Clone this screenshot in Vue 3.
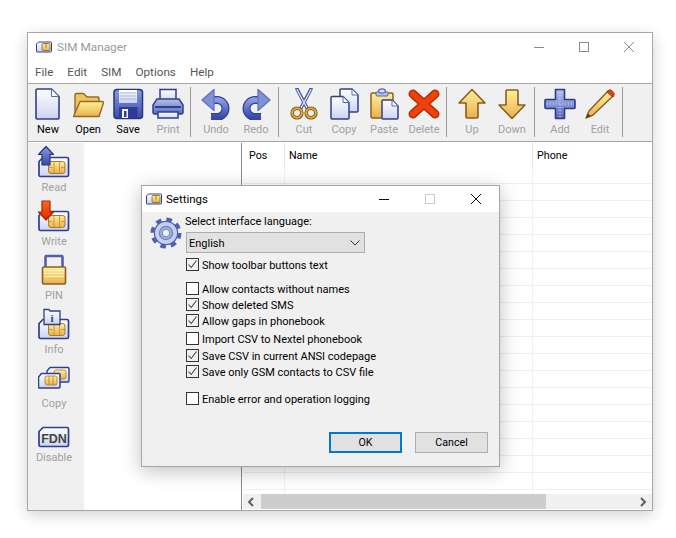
<template>
  <div class="page">
    <!-- shared gradients and icon symbols -->
    <svg class="defs" aria-hidden="true">
      <defs>
        <linearGradient id="paper" x1="0" y1="0" x2="0" y2="1"><stop offset="0" stop-color="#ffffff" /><stop offset="1" stop-color="#ccd3f0" /></linearGradient>
        <linearGradient id="blue" x1="0" y1="0" x2="0" y2="1"><stop offset="0" stop-color="#8a9ae0" /><stop offset="1" stop-color="#3a4aa8" /></linearGradient>
        <linearGradient id="steel" x1="0" y1="0" x2="0" y2="1"><stop offset="0" stop-color="#b4c0ea" /><stop offset="1" stop-color="#5c6cc0" /></linearGradient>
        <linearGradient id="gold" x1="0" y1="0" x2="0" y2="1"><stop offset="0" stop-color="#fff09a" /><stop offset="1" stop-color="#eab04c" /></linearGradient>
        <linearGradient id="red" x1="0" y1="0" x2="0" y2="1"><stop offset="0" stop-color="#ff6a20" /><stop offset="1" stop-color="#e02800" /></linearGradient>

        <symbol id="i-new" viewBox="0 0 32 32">
          <path d="M5.5 1h14L27 8.5V29.5a1.5 1.5 0 0 1-1.5 1.5h-20A1.5 1.5 0 0 1 4 29.5V2.5A1.5 1.5 0 0 1 5.5 1z" fill="url(#paper)" stroke="#2f3f8c" stroke-width="1.6" />
          <path d="M19.5 1v7.5H27z" fill="#fff" stroke="#5a68a8" stroke-width="1" />
        </symbol>

        <symbol id="i-open" viewBox="0 0 32 32">
          <path d="M3 28V7a1.5 1.5 0 0 1 1.5-1.5h7L15 9h11a1 1 0 0 1 1 1v18z" fill="#f2c45c" stroke="#94682a" stroke-width="1.4" />
          <path d="M8 13.5h22.5a1 1 0 0 1 1 1.3L27 28.5H1.5z" fill="url(#gold)" stroke="#94682a" stroke-width="1.4" stroke-linejoin="round" />
        </symbol>

        <symbol id="i-save" viewBox="0 0 32 32">
          <rect x="2" y="1.5" width="28.5" height="29" rx="3" fill="url(#blue)" stroke="#27357f" stroke-width="1.5" />
          <rect x="7" y="2" width="18" height="13" fill="url(#paper)" />
          <path d="M8 5h16M8 8h16M8 11h16" stroke="#aab4dc" stroke-width="1" />
          <rect x="7" y="19" width="18.5" height="11" fill="#2f3d90" />
          <rect x="10" y="21" width="6" height="9" fill="#f4f6ff" />
          <rect x="12" y="23" width="2.5" height="6" fill="#2f3d90" />
        </symbol>

        <symbol id="i-print" viewBox="0 0 32 32">
          <rect x="8" y="1.5" width="16" height="12" fill="url(#paper)" stroke="#2f3f8c" stroke-width="1.5" />
          <path d="M5 11h22l4 6v7.5a1.5 1.5 0 0 1-1.5 1.5h-27A1.5 1.5 0 0 1 1 24.5V17z" fill="url(#steel)" stroke="#2f3f8c" stroke-width="1.5" />
          <path d="M3 19h26" stroke="#2f3f8c" stroke-width="2" />
          <rect x="6" y="24" width="20" height="6" fill="url(#paper)" stroke="#2f3f8c" stroke-width="1.5" />
        </symbol>

        <symbol id="i-undo" viewBox="0 0 32 32">
          <path d="M12 12h5a8.5 8.5 0 0 1 0 17h-6" fill="none" stroke="#2f3f94" stroke-width="8" />
          <path d="M12 12h5a8.5 8.5 0 0 1 0 17h-6" fill="none" stroke="url(#blue)" stroke-width="5.5" />
          <path d="M14 1.5L2 12l12 10.5z" fill="#7e90d8" stroke="#6476c0" stroke-width="1.4" stroke-linejoin="round" />
        </symbol>

        <symbol id="i-redo" viewBox="0 0 32 32">
          <g transform="matrix(-1 0 0 1 32 0)">
            <path d="M12 12h5a8.5 8.5 0 0 1 0 17h-6" fill="none" stroke="#2f3f94" stroke-width="8" />
            <path d="M12 12h5a8.5 8.5 0 0 1 0 17h-6" fill="none" stroke="url(#blue)" stroke-width="5.5" />
            <path d="M14 1.5L2 12l12 10.5z" fill="#7e90d8" stroke="#6476c0" stroke-width="1.4" stroke-linejoin="round" />
          </g>
        </symbol>

        <symbol id="i-cut" viewBox="0 0 32 32">
          <path d="M9 1l10 19M23 1L13 20" stroke="#3c4c98" stroke-width="3.4" stroke-linecap="round" />
          <path d="M9 1.5l10 18.5M23 1.5L13 20" stroke="#dfe4f8" stroke-width="1.4" stroke-linecap="round" />
          <circle cx="9" cy="25" r="4.8" fill="none" stroke="#7a5218" stroke-width="3.6" />
          <circle cx="23" cy="25" r="4.8" fill="none" stroke="#7a5218" stroke-width="3.6" />
          <circle cx="9" cy="25" r="4.8" fill="none" stroke="#e0a840" stroke-width="2" />
          <circle cx="23" cy="25" r="4.8" fill="none" stroke="#e0a840" stroke-width="2" />
        </symbol>

        <symbol id="i-copy" viewBox="0 0 32 32">
          <path d="M13 1h11l6 6v16a1 1 0 0 1-1 1H13a1 1 0 0 1-1-1V2a1 1 0 0 1 1-1z" fill="url(#paper)" stroke="#2f3f8c" stroke-width="1.5" />
          <path d="M24 1v6h6z" fill="#fff" stroke="#5a68a8" stroke-width="1" />
          <path d="M4 8.5h11l6 6V30a1 1 0 0 1-1 1H4a1 1 0 0 1-1-1V9.5a1 1 0 0 1 1-1z" fill="url(#paper)" stroke="#2f3f8c" stroke-width="1.5" />
          <path d="M15 8.5v6h6z" fill="#fff" stroke="#5a68a8" stroke-width="1" />
        </symbol>

        <symbol id="i-paste" viewBox="0 0 32 32">
          <rect x="3" y="5" width="22" height="25" rx="1.5" fill="url(#gold)" stroke="#8a6020" stroke-width="1.5" />
          <rect x="8" y="4" width="12" height="4" rx="1" fill="#b8c2e8" stroke="#5a68a8" stroke-width="1" />
          <ellipse cx="14" cy="3" rx="3.5" ry="2.2" fill="#d8def4" stroke="#5a68a8" stroke-width="1.2" />
          <path d="M15 12h9l6 6v12a1 1 0 0 1-1 1H15a1 1 0 0 1-1-1V13a1 1 0 0 1 1-1z" fill="url(#paper)" stroke="#2f3f8c" stroke-width="1.5" />
          <path d="M24 12v6h6z" fill="#fff" stroke="#5a68a8" stroke-width="1" />
        </symbol>

        <symbol id="i-delete" viewBox="0 0 32 32">
          <path d="M5 6l22 20M27 6L5 26" stroke="#a83000" stroke-width="9" stroke-linecap="round" />
          <path d="M5 6l22 20M27 6L5 26" stroke="#f2400c" stroke-width="6" stroke-linecap="round" />
        </symbol>

        <symbol id="i-up" viewBox="0 0 32 32">
          <path d="M16 1.5L29 15h-7v14a1 1 0 0 1-1 1H11a1 1 0 0 1-1-1V15H3z" fill="url(#gold)" stroke="#8a5c20" stroke-width="1.6" stroke-linejoin="round" />
        </symbol>

        <symbol id="i-down" viewBox="0 0 32 32">
          <path d="M16 30.5L29 17h-7V3a1 1 0 0 0-1-1H11a1 1 0 0 0-1 1v14H3z" fill="url(#gold)" stroke="#8a5c20" stroke-width="1.6" stroke-linejoin="round" />
        </symbol>

        <symbol id="i-add" viewBox="0 0 32 32">
          <path d="M11.5 1.5h9v10H30a1 1 0 0 1 1 1v7a1 1 0 0 1-1 1h-9.5v10h-9v-10H2a1 1 0 0 1-1-1v-7a1 1 0 0 1 1-1h9.5z" fill="url(#steel)" stroke="#2a3a8c" stroke-width="1.6" stroke-linejoin="round" />
          <path d="M3 16h26M16 4v25" stroke="#d0d8f4" stroke-width="1" stroke-dasharray="1 2" />
        </symbol>

        <symbol id="i-edit" viewBox="0 0 32 32">
          <path d="M24 3l5 5L9 27l-7 3 3-7z" fill="url(#gold)" stroke="#8a5c20" stroke-width="1.4" stroke-linejoin="round" />
          <path d="M23 4l6 5 1-2c1-2-3-6-5-5z" fill="#e8401c" stroke="#a83000" stroke-width="1" />
          <path d="M2.5 29.5l1.5-4 2.5 2.5z" fill="#4a3520" />
        </symbol>

        <symbol id="i-sim" viewBox="0 0 32 32">
          <path d="M5 11.5h24a1.5 1.5 0 0 1 1.5 1.5v16a1.5 1.5 0 0 1-1.5 1.5H2.5A1.5 1.5 0 0 1 1 29V15.5z" fill="url(#paper)" stroke="#2f3f8f" stroke-width="1.7" />
          <rect x="10.5" y="15.5" width="16.5" height="12" rx="2.5" fill="url(#gold)" stroke="#a8782c" stroke-width="1" />
          <path d="M10.5 21.5h4M23 21.5h4M16 15.5v12M21.5 15.5v12" stroke="#b88a3c" stroke-width="0.8" />
        </symbol>

        <symbol id="i-read" viewBox="0 0 32 32">
          <use href="#i-sim" width="32" height="32" />
          <path d="M8 0.5l7.5 8H12V19H4V8.5H0.5z" fill="url(#blue)" stroke="#27357f" stroke-width="1.2" stroke-linejoin="round" />
        </symbol>

        <symbol id="i-write" viewBox="0 0 32 32">
          <use href="#i-sim" width="32" height="32" />
          <path d="M8 20l7.5-8H12V1H4v11H0.5z" fill="url(#red)" stroke="#a02800" stroke-width="1.2" stroke-linejoin="round" />
        </symbol>

        <symbol id="i-pin" viewBox="0 0 32 32">
          <path d="M7.5 15V3a1 1 0 0 1 1-1h15a1 1 0 0 1 1 1v12" fill="none" stroke="#5060a8" stroke-width="2.6" />
          <rect x="4.5" y="13" width="23" height="17" rx="1" fill="url(#gold)" stroke="#8a6020" stroke-width="1.6" />
          <path d="M6 16.5h20M6 19.5h20M6 22.5h20" stroke="#fff2b8" stroke-width="1" />
        </symbol>

        <symbol id="i-info" viewBox="0 0 32 32">
          <use href="#i-sim" width="32" height="32" />
          <path d="M6 1.5h5l1 1.5h10v13.5H6z" fill="url(#paper)" stroke="#2f3f8f" stroke-width="1.3" />
          <text x="14" y="13.5" class="svg-info">i</text>
        </symbol>

        <symbol id="i-simcopy" viewBox="0 0 32 32">
          <path d="M12 5.5h18a1 1 0 0 1 1 1V19a1 1 0 0 1-1 1H9V9z" fill="url(#paper)" stroke="#2f3f8f" stroke-width="1.4" />
          <rect x="16" y="8" width="12" height="9" rx="2" fill="url(#gold)" stroke="#a8782c" stroke-width="0.8" />
          <path d="M3.5 11.5H21a1 1 0 0 1 1 1V25a1 1 0 0 1-1 1H1a1 1 0 0 1-.5-1V15z" fill="url(#paper)" stroke="#2f3f8f" stroke-width="1.5" />
          <rect x="7" y="14" width="12" height="9" rx="2" fill="url(#gold)" stroke="#a8782c" stroke-width="0.8" />
          <path d="M11 14v9M15 14v9" stroke="#a8782c" stroke-width="0.7" />
        </symbol>

        <symbol id="i-fdn" viewBox="0 0 32 32">
          <path d="M5 11.5h24a1.5 1.5 0 0 1 1.5 1.5v16a1.5 1.5 0 0 1-1.5 1.5H2.5A1.5 1.5 0 0 1 1 29V15.5z" fill="url(#paper)" stroke="#2f3f8f" stroke-width="1.7" />
          <text x="16" y="26.5" class="svg-fdn">FDN</text>
        </symbol>

        <symbol id="i-gear" viewBox="0 0 32 32">
          <circle cx="16" cy="16" r="13.2" fill="none" stroke="#5060ac" stroke-width="4.6" stroke-dasharray="5.4 4.97" />
          <circle cx="16" cy="16" r="11.6" fill="#c6cfee" stroke="#5060ac" stroke-width="1.2" />
          <circle cx="16" cy="16" r="6.6" fill="#a4b0e0" stroke="#7080c0" stroke-width="1.2" />
          <circle cx="16" cy="16" r="3.8" fill="#eef1fb" stroke="#7080c0" stroke-width="1" />
        </symbol>

        <symbol id="i-app" viewBox="0 0 16 12">
          <path d="M2.5 1h12a1 1 0 0 1 1 1v8a1 1 0 0 1-1 1H1a.5.5 0 0 1-.5-.5V3z" fill="url(#paper)" stroke="#2f3f8f" stroke-width="1" />
          <rect x="6" y="2.5" width="8" height="7" rx="1" fill="url(#gold)" stroke="#8a6020" stroke-width="0.8" />
          <path d="M10 2.5v4" stroke="#8a6020" stroke-width="0.8" />
        </symbol>
      </defs>
    </svg>

    <div class="window">
      <div class="titlebar">
        <svg class="app-icon"><use href="#i-app" /></svg>
        <span class="title-text">SIM Manager</span>
        <div class="win-controls">
          <svg class="ctl" viewBox="0 0 10 10"><path d="M0 5.5h10" /></svg>
          <svg class="ctl" viewBox="0 0 10 10"><rect x="0.5" y="0.5" width="9" height="9" /></svg>
          <svg class="ctl" viewBox="0 0 10 10"><path d="M0 0l10 10M10 0L0 10" /></svg>
        </div>
      </div>

      <nav class="menubar">
        <span v-for="m in menus" :key="m">{{ m }}</span>
      </nav>

      <div class="toolbar">
        <template v-for="group in toolbar" :key="group[0].label">
          <div v-for="b in group" :key="b.label" class="tool" :class="{ 'tool--off': !b.on }">
            <svg class="icon32"><use :href="`#i-${b.icon}`" /></svg>
            <span>{{ b.label }}</span>
          </div>
          <div class="sep"></div>
        </template>
      </div>

      <div class="content">
        <aside class="side">
          <div v-for="s in sideItems" :key="s.label" class="side-item">
            <svg class="icon32"><use :href="`#i-${s.icon}`" /></svg>
            <span>{{ s.label }}</span>
          </div>
        </aside>
        <div class="tree"></div>
        <div class="splitter"></div>
        <div class="list">
          <div class="list-view">
            <div class="col col-pos"><div class="col-head">Pos</div></div>
            <div class="col col-name"><div class="col-head">Name</div></div>
            <div class="col col-phone"><div class="col-head">Phone</div></div>
          </div>
          <div class="hscroll">
            <svg class="arrow" viewBox="0 0 18 10"><path d="M10 1L6 5l4 4" /></svg>
            <div class="thumb"></div>
            <svg class="arrow arrow-right" viewBox="0 0 18 10"><path d="M7 1l4 4-4 4" /></svg>
          </div>
        </div>
      </div>
    </div>

    <div class="dialog">
      <div class="dlg-title">
        <svg class="app-icon app-icon--dlg"><use href="#i-app" /></svg>
        <span>Settings</span>
        <div class="dlg-controls">
          <svg class="ctl ctl--dark" viewBox="0 0 10 10"><path d="M0 5.5h10" /></svg>
          <svg class="ctl ctl--off" viewBox="0 0 10 10"><rect x="0.5" y="0.5" width="9" height="9" /></svg>
          <svg class="ctl ctl--dark" viewBox="0 0 10 10"><path d="M0 0l10 10M10 0L0 10" /></svg>
        </div>
      </div>
      <div class="dlg-body">
        <div class="dlg-main">
          <svg class="icon32 gear"><use href="#i-gear" /></svg>
          <div class="dlg-form">
            <div class="lang-label">Select interface language:</div>
            <div class="select">
              <span>English</span>
              <svg class="chev" viewBox="0 0 10 6"><path d="M0.5 0.5L5 5l4.5-4.5" /></svg>
            </div>
            <div
              v-for="o in options"
              :key="o.text"
              class="check-row"
              :style="{ marginTop: o.gap + 'px' }"
            >
              <span class="box" :class="{ 'box--on': o.on }">
                <svg v-if="o.on" viewBox="0 0 11 11"><path d="M1.5 5.5L4.2 8.5L9.5 1.5" /></svg>
              </span>
              <span class="check-text">{{ o.text }}</span>
            </div>
          </div>
        </div>
        <div class="dlg-buttons">
          <button class="btn btn--default">OK</button>
          <button class="btn">Cancel</button>
        </div>
      </div>
    </div>
  </div>
</template>

<script setup>
const menus = ['File', 'Edit', 'SIM', 'Options', 'Help'];

const toolbar = [
  [
    { label: 'New', icon: 'new', on: true },
    { label: 'Open', icon: 'open', on: true },
    { label: 'Save', icon: 'save', on: true },
    { label: 'Print', icon: 'print' },
  ],
  [
    { label: 'Undo', icon: 'undo' },
    { label: 'Redo', icon: 'redo' },
  ],
  [
    { label: 'Cut', icon: 'cut' },
    { label: 'Copy', icon: 'copy' },
    { label: 'Paste', icon: 'paste' },
    { label: 'Delete', icon: 'delete' },
  ],
  [
    { label: 'Up', icon: 'up' },
    { label: 'Down', icon: 'down' },
  ],
  [
    { label: 'Add', icon: 'add' },
    { label: 'Edit', icon: 'edit' },
  ],
];

const sideItems = [
  { label: 'Read', icon: 'read' },
  { label: 'Write', icon: 'write' },
  { label: 'PIN', icon: 'pin' },
  { label: 'Info', icon: 'info' },
  { label: 'Copy', icon: 'simcopy' },
  { label: 'Disable', icon: 'fdn' },
];

// gap = space above the row, rows are 16px tall
const options = [
  { text: 'Show toolbar buttons text', on: true, gap: 3 },
  { text: 'Allow contacts without names', on: false, gap: 8 },
  { text: 'Show deleted SMS', on: true, gap: 0 },
  { text: 'Allow gaps in phonebook', on: true, gap: 0 },
  { text: 'Import CSV to Nextel phonebook', on: false, gap: 2 },
  { text: 'Save CSV in current ANSI codepage', on: true, gap: 1 },
  { text: 'Save only GSM contacts to CSV file', on: true, gap: 0 },
  { text: 'Enable error and operation logging', on: false, gap: 11 },
];
</script>

<style>
body { background: #fff; }
</style>

<style scoped>
* { box-sizing: border-box; }
.page {
  position: relative; width: 676px; height: 538px; overflow: hidden;
  padding: 32px 0 0 27px;
  font-family: Roboto, "Open Sans", sans-serif; font-size: 11px; color: #000;
}
.defs { position: absolute; width: 0; height: 0; }
.svg-info { font: bold 11px "Liberation Serif", serif; fill: #2f3f8f; text-anchor: middle; }
.svg-fdn { font: bold 12.5px "Liberation Sans", sans-serif; fill: #444; text-anchor: middle; }

.window {
  width: 626px; height: 479px; border: 1px solid #a6a6a6; background: #fff;
  display: flex; flex-direction: column;
  box-shadow: 0 4px 14px rgba(0, 0, 0, 0.18);
}
.titlebar { height: 26px; flex: none; display: flex; align-items: center; padding: 2px 0 0 8px; color: #9a9a9a; }
.app-icon { width: 16px; height: 12px; margin-right: 5px; flex: none; }
.title-text { font-size: 11.8px; }
.win-controls { margin-left: auto; display: flex; gap: 35px; padding-right: 18px; }
.ctl { width: 10px; height: 10px; fill: none; stroke: #8a8a8a; stroke-width: 1; flex: none; }
.ctl--dark { stroke: #111; }
.ctl--off { stroke: #ccc; }

.menubar { height: 24px; flex: none; display: flex; align-items: center; gap: 14px; padding: 1px 0 0 7px; color: #555; font-size: 11.7px; }

.toolbar { height: 59px; flex: none; display: flex; background: #f0f0f0; border-top: 1px solid #a6a6a6; border-bottom: 1px solid #a6a6a6; }
.tool { width: 40px; padding-top: 4px; display: flex; flex-direction: column; align-items: center; }
.tool span { line-height: 16px; margin-top: 2px; white-space: nowrap; }
.tool--off span { color: #a0a0a0; }
.icon32 { width: 32px; height: 32px; flex: none; }
.sep { width: 1px; height: 50px; margin: 3px 5px 0 2px; background: #9c9c9c; }

.content { flex: 1; min-height: 0; display: flex; padding-top: 1px; }
.side { width: 56px; background: #f0f0f0; padding: 3px 4px 0 0; display: flex; flex-direction: column; align-items: center; }
.side-item { height: 54px; display: flex; flex-direction: column; align-items: center; color: #a0a0a0; }
.side-item span { line-height: 16px; margin-top: 2px; }
.tree { width: 157px; }
.splitter { width: 2px; background: #fff; border-left: 1px solid #8c8c8c; }

.list { flex: 1; min-width: 0; display: flex; flex-direction: column; padding-bottom: 1px; }
.list-view {
  flex: 1; display: flex;
  background-image: repeating-linear-gradient(to bottom, transparent 0, transparent 16px, #f0f0f0 16px, #f0f0f0 17px);
  background-position: 0 24px; background-size: 100% 17px;
  background-repeat: repeat-y;
}
.col { border-right: 1px solid #f0f0f0; }
.col-pos { width: 42px; }
.col-name { width: 248px; }
.col-phone { flex: 1; border-right: none; }
.col-head { height: 24px; padding-left: 4px; background: #fff; line-height: 26px; font-size: 10.7px; border-right: 1px solid #e6e6e6; margin-right: -1px; }
.col-pos .col-head { padding-left: 6px; }
.col-phone .col-head { border-right: none; margin-right: 0; }

.hscroll { height: 15px; flex: none; display: flex; align-items: center; background: #f0f0f0; }
.arrow { width: 18px; height: 10px; fill: none; stroke: #606060; stroke-width: 2; flex: none; }
.arrow-right { margin-left: auto; }
.thumb { width: 285px; height: 15px; background: #cdcdcd; }

.dialog {
  position: absolute; left: 141px; top: 185px; width: 359px; height: 282px;
  border: 1px solid #a6a6a6; background: #f0f0f0;
  display: flex; flex-direction: column;
  box-shadow: 0 4px 18px rgba(0, 0, 0, 0.25);
}
.dlg-title { height: 26px; flex: none; background: #fff; display: flex; align-items: center; padding-left: 4px; font-size: 11.5px; }
.app-icon--dlg { margin-right: 4px; }
.dlg-controls { margin-left: auto; display: flex; gap: 36px; padding-right: 18px; }

.dlg-body { flex: 1; display: flex; flex-direction: column; }
.dlg-main { display: flex; flex: 1; padding-left: 8px; }
.gear { margin-top: 5px; margin-right: 3px; }
.dlg-form { padding-top: 2px; }
.lang-label { line-height: 16px; }
.select {
  width: 179px; height: 21px; margin: 2px 0 0 1px; padding: 0 4px 0 2px;
  background: #e1e1e1; border: 1px solid #adadad;
  display: flex; align-items: center; justify-content: space-between;
}
.select span { padding-top: 2px; }
.chev { width: 10px; height: 6px; fill: none; stroke: #333; stroke-width: 1; }
.check-row { height: 16px; display: flex; align-items: center; gap: 3px; margin-left: 1px; white-space: nowrap; }
.check-text { padding-top: 2px; }
.box { width: 13px; height: 13px; flex: none; background: #fff; border: 1px solid #333; }
.box--on { background: #f0f0f0; }
.box svg { display: block; width: 11px; height: 11px; fill: none; stroke: #444; stroke-width: 1.1; }

.dlg-buttons { display: flex; justify-content: flex-end; gap: 13px; padding: 0 11px 13px 0; }
.btn {
  width: 73px; height: 21px; padding: 0; background: #e1e1e1; border: 1px solid #adadad;
  font: inherit; font-size: 10.7px; color: #000;
}
.btn--default { border: 2px solid #0078d7; }
</style>
